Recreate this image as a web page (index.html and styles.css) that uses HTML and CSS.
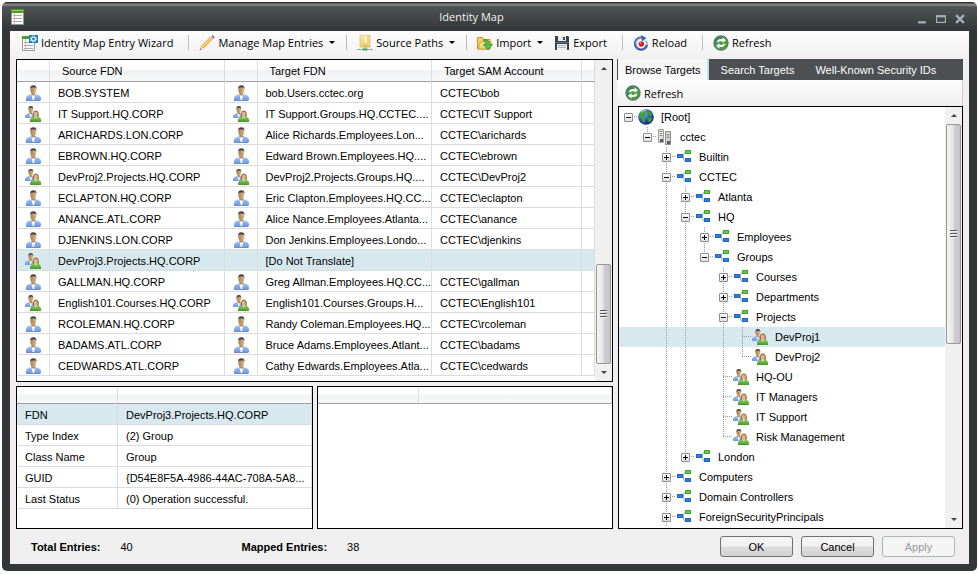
FILE: index.html
```
<!DOCTYPE html>
<html lang="en">
<head>
  <meta charset="UTF-8" />
  <meta name="viewport" content="width=device-width, initial-scale=1.0" />
  <title>Identity Map</title>
  <link rel="stylesheet" href="styles.css">
</head>
<body>
  <!-- Icon sprite -->
  <svg class="sprite" aria-hidden="true">
    <defs>
      <linearGradient id="gBlue" x1="0" y1="0" x2="0" y2="1"><stop offset="0" stop-color="#a9c3f0"/><stop offset="1" stop-color="#6d97e2"/></linearGradient>
      <linearGradient id="gGreen" x1="0" y1="0" x2="0" y2="1"><stop offset="0" stop-color="#8fd060"/><stop offset="1" stop-color="#3f9a26"/></linearGradient>
      <linearGradient id="gSkin" x1="0" y1="0" x2="1" y2="0"><stop offset="0" stop-color="#a87d50"/><stop offset="1" stop-color="#dcb98c"/></linearGradient>
      <linearGradient id="gYellow" x1="0" y1="0" x2="1" y2="1"><stop offset="0" stop-color="#fdf3b4"/><stop offset="1" stop-color="#e0b43c"/></linearGradient>
      <radialGradient id="gGlobe" cx="0.35" cy="0.3" r="0.8"><stop offset="0" stop-color="#8db8ee"/><stop offset="0.5" stop-color="#2d57b4"/><stop offset="1" stop-color="#0c1f5c"/></radialGradient>
      <linearGradient id="gRefresh" x1="0" y1="0" x2="1" y2="1"><stop offset="0" stop-color="#2f7d5c"/><stop offset="1" stop-color="#5fae2e"/></linearGradient>
    </defs>
    <symbol id="user" viewBox="0 0 16 16">
      <path d="M1 15.500v-2.500q.2-2.500 3-3l2.500-1h4l2.500 1q2.800.500 3 3v2.500z" fill="url(#gBlue)"/>
      <path d="M1 15.500h14" stroke="#5a7fca" stroke-width=".8"/>
      <path d="M6.500 9.500h3.600l-1 5.500h-1.400z" fill="#fff"/>
      <path d="M6.500 7h3.600v2.500l-1.800 1.500-1.800-1.500z" fill="#b98c5c"/>
      <ellipse cx="8.300" cy="4.900" rx="2.900" ry="3.900" fill="url(#gSkin)"/>
      <path d="M5.100 4.200q-.4-3.900 3.200-4 3.600.100 3.200 4-.5-1.300-1-1.600h-4.400q-.5.300-1 1.600z" fill="#454545"/>
    </symbol>
    <symbol id="group" viewBox="0 0 16 16">
      <path d="M0 12v-2q.2-2 2.500-2.600l2-.7h3l2 1v4.300z" fill="url(#gBlue)"/>
      <path d="M4.500 7.500h2.200l-.3 4h-1z" fill="#fff"/>
      <path d="M4.500 5.500h2.500v2l-1 1-1.500-1z" fill="#b98c5c"/>
      <ellipse cx="5.800" cy="3.600" rx="2.300" ry="3.100" fill="url(#gSkin)"/>
      <path d="M3.400 3.300q-.3-3.200 2.500-3.300 2.700.100 2.400 3.300l-.9-1.500h-3z" fill="#454545"/>
      <path d="M8 11q-.9-6.500 2.800-6.600 3.700.100 2.900 6.600z" fill="#96683c"/>
      <path d="M5 16v-2q.3-2.500 3-3l1.500-.5h3l1.500.5q1.900.700 2 3v2z" fill="url(#gGreen)"/>
      <path d="M9.500 9.500h2.600l.3 1.300-1.600 2.200-1.600-2.200z" fill="#e8c8a0"/>
      <ellipse cx="10.700" cy="8" rx="2" ry="2.500" fill="#dfb488"/>
    </symbol>
    <symbol id="ou" viewBox="0 0 16 16">
      <path d="M6 7.500h2M10 3.500h-1q-1.500 0-1.500 3.500 0 5.500 1.500 5.500h1" fill="none" stroke="#97a3b3"/>
      <rect x="1.500" y="5.500" width="5" height="3" fill="#1f84ee" stroke="#2a62b4"/>
      <rect x="9.500" y="1.500" width="5" height="3" fill="#5ad03a" stroke="#4aa032"/>
      <rect x="9.500" y="9.500" width="5" height="3" fill="#1f84ee" stroke="#2a62b4"/>
    </symbol>
    <symbol id="globe" viewBox="0 0 16 16">
      <circle cx="8" cy="8" r="7.800" fill="url(#gGlobe)"/>
      <path d="M1 6q2-4.500 6-5l1.500 1.500-1.500 2 1 1.500-2.500 2.500 1.500 2.500-1 3q-2-1-2.500-4z" fill="#3fa535"/>
      <path d="M10.500 1.500q3 1.300 4.200 4.500l-1.700 1.500-2-1.500-1.500-2zM9.500 9l3-1 2 1.500q-.7 2.500-3 4.200l-1.500-2z" fill="#3a9a30"/>
      <path d="M3 3.500q2-2.300 5-2" stroke="#fff" stroke-opacity=".6" fill="none"/>
    </symbol>
    <symbol id="server" viewBox="0 0 16 16">
      <path d="M1.500.5h5v13h-5z" fill="#e2e2e0" stroke="#a2a2a0"/>
      <path d="M8.500 2.500h5v13h-5z" fill="#d6d6d4" stroke="#8e8e8c"/>
      <path d="M2.500 2.500h3M2.500 6.500h3M9.500 5.500h3M9.500 8.500h3" stroke="#909090"/>
      <path d="M3 4.500h2M10 7h2" stroke="#62c23c"/>
      <path d="M3 10h3v3h-3zM10 12h3v3h-3z" fill="#5c5c5c"/>
    </symbol>
    <symbol id="sheet" viewBox="0 0 16 16">
      <path d="M1.500.5h12v15h-12z" fill="#fbfbfb" stroke="#8f9a8a"/>
      <path d="M1 0h13v4h-13z" fill="#4f9c2c"/>
      <path d="M2 1.500h11" stroke="#8cca60"/>
      <path d="M3 6.500h9M3 9.500h9M3 12.500h9" stroke="#a9a9b2"/>
      <path d="M4.500 4v11" stroke="#e09a9a" stroke-width=".7"/>
    </symbol>
    <symbol id="wizard" viewBox="0 0 16 16">
      <path d="M.5 1.500h12v14h-12z" fill="#fbfbfb" stroke="#999"/>
      <path d="M0 1h13v3h-13z" fill="#4f9c2c"/>
      <path d="M2 7.500h8M2 10.500h9M2 13.500h9" stroke="#a9a9b2"/>
      <path d="M3.500 4v11" stroke="#e09a9a" stroke-width=".7"/>
      <path d="M7 0h9v8h-9z" fill="#1680c4"/>
      <circle cx="11.500" cy="4" r="2" fill="none" stroke="#fff" stroke-width="1.200"/>
      <circle cx="11.500" cy="4" r="3" fill="none" stroke="#fff" stroke-dasharray="1.200 1.150"/>
    </symbol>
    <symbol id="pencil" viewBox="0 0 16 16">
      <path d="M1.500 14l1-3 9-9 2 2-9 9z" fill="#f5bd45" stroke="#c98f30" stroke-width=".6"/>
      <path d="M3.500 11.500l8.500-8.500" stroke="#ffe49a"/>
      <path d="M1 15l1.300-3.500 2 2z" fill="#efd6ac"/>
      <path d="M.5 15.500l.9-2 1 1z" fill="#555"/>
      <path d="M11.300 2.200l1-1 2.300 2.300-1 1z" fill="#c3c8ce"/>
      <path d="M12.300 1.200l1.200-1q2 .3 2.200 2.300l-1 1.200z" fill="#e2525c"/>
    </symbol>
    <symbol id="paths" viewBox="0 0 16 16">
      <path d="M3 0h10v12h-10z" fill="url(#gYellow)" stroke="#d6b65c" stroke-width=".7"/>
      <path d="M7.500 1h2.500v7h-2.500z" fill="#fffbe0"/>
      <path d="M9.500 1h3v10.500l-3-2z" fill="#f0d888"/>
      <path d="M8 12v2" stroke="#6a9a6a"/>
      <path d="M0 14.500h16" stroke="#9aa69a"/>
      <path d="M5.500 13.500h5v2h-5z" fill="#3fae4a"/>
    </symbol>
    <symbol id="import" viewBox="0 0 16 16">
      <path d="M.5 14v-11.500h5l1.500 2h6v9.500z" fill="#f5cf5c" stroke="#c89426"/>
      <path d="M1 14l2.500-7h11l-2.500 7z" fill="url(#gYellow)" stroke="#c89426" stroke-width=".7"/>
      <path d="M6 5q6-1.500 6.500 4.500h3l-4.500 5.500-4.500-5.500h2.500q0-3-3-4.500z" fill="#57c043" stroke="#27882a" stroke-width=".7"/>
    </symbol>
    <symbol id="floppy" viewBox="0 0 16 16">
      <path d="M1 1h13l1 1v13h-14z" fill="#3a4450"/>
      <path d="M4 1h8v5h-8z" fill="#e8edf2"/>
      <path d="M9 2h2v3h-2z" fill="#3a4450"/>
      <path d="M3 9h10v6h-10z" fill="#f2f5f8"/>
      <path d="M4 10.500h8M4 12.500h8" stroke="#a8b2bc"/>
      <path d="M1.500 7.500h13" stroke="#61707f"/>
    </symbol>
    <symbol id="reload" viewBox="0 0 16 16">
      <path d="M9 2.700a6 6 0 1 0 5 7" fill="none" stroke="#3f66a8" stroke-width="2.400"/>
      <path d="M8.500 3a5.700 5.700 0 0 0-6 5.500" fill="none" stroke="#9dbbe6" stroke-width=".9"/>
      <path d="M8 0l5.500 3-4.500 3.500z" fill="#3f66a8"/>
      <path d="M12.500 5.500q1.800 1.500 1.800 4" fill="none" stroke="#7f9fd4" stroke-width="1.200"/>
      <circle cx="8.300" cy="9" r="2.800" fill="#d61f26"/>
      <circle cx="7.500" cy="8" r="1" fill="#f38a8a"/>
    </symbol>
    <symbol id="refresh" viewBox="0 0 16 16">
      <circle cx="8" cy="8" r="7" fill="url(#gRefresh)" stroke="#4c7f66" stroke-width="1.300"/>
      <path d="M3.500 7.300q.8-3 4-3.300h2v-1.800l3.500 3-3.500 2.800v-1.800h-2q-1.500 0-2 1.100zM12.500 8.700q-.8 3-4 3.300h-2v1.800l-3.500-3 3.500-2.800v1.800h2q1.500 0 2-1.100z" fill="#f4faf2"/>
    </symbol>
  </svg>

  <div class="window">
    <header class="titlebar">
      <svg class="icon"><use href="#sheet"/></svg>
      <h1>Identity Map</h1>
      <div class="controls">
        <button aria-label="Minimize"><svg viewBox="0 0 9 9"><path d="M1 7.500h7" stroke-width="2"/></svg></button>
        <button aria-label="Maximize"><svg viewBox="0 0 9 9"><path d="M.5 2v5.500h8v-5.500M0 2h9" stroke-width="1"/><path d="M0 2h9" stroke-width="2"/></svg></button>
        <button aria-label="Close"><svg viewBox="0 0 9 9"><path d="M1 1l7 7M8 1l-7 7" stroke-width="2"/></svg></button>
      </div>
    </header>

    <div class="content">
      <div class="toolbar" role="toolbar">
        <button><svg class="icon"><use href="#wizard"/></svg>Identity Map Entry Wizard</button>
        <span class="sep"></span>
        <button class="menu"><svg class="icon"><use href="#pencil"/></svg>Manage Map Entries</button>
        <span class="sep"></span>
        <button class="menu"><svg class="icon"><use href="#paths"/></svg>Source Paths</button>
        <span class="sep"></span>
        <button class="menu"><svg class="icon"><use href="#import"/></svg>Import</button>
        <button><svg class="icon"><use href="#floppy"/></svg>Export</button>
        <span class="sep"></span>
        <button><svg class="icon"><use href="#reload"/></svg>Reload</button>
        <span class="sep"></span>
        <button><svg class="icon"><use href="#refresh"/></svg>Refresh</button>
      </div>

      <main class="main">
        <div class="left">
          <section class="panel entries">
            <table>
              <colgroup><col class="c-icon"><col><col class="c-icon"><col><col class="c-sam"><col class="c-end"></colgroup>
              <thead>
                <tr><th></th><th>Source FDN</th><th></th><th>Target FDN</th><th>Target SAM Account</th><th></th></tr>
              </thead>
              <tbody>
                <tr><td><svg class="icon"><use href="#user"/></svg></td><td>BOB.SYSTEM</td><td><svg class="icon"><use href="#user"/></svg></td><td>bob.Users.cctec.org</td><td>CCTEC\bob</td><td></td></tr>
                <tr><td><svg class="icon"><use href="#group"/></svg></td><td>IT Support.HQ.CORP</td><td><svg class="icon"><use href="#group"/></svg></td><td>IT Support.Groups.HQ.CCTEC....</td><td>CCTEC\IT Support</td><td></td></tr>
                <tr><td><svg class="icon"><use href="#user"/></svg></td><td>ARICHARDS.LON.CORP</td><td><svg class="icon"><use href="#user"/></svg></td><td>Alice Richards.Employees.Lon...</td><td>CCTEC\arichards</td><td></td></tr>
                <tr><td><svg class="icon"><use href="#user"/></svg></td><td>EBROWN.HQ.CORP</td><td><svg class="icon"><use href="#user"/></svg></td><td>Edward Brown.Employees.HQ....</td><td>CCTEC\ebrown</td><td></td></tr>
                <tr><td><svg class="icon"><use href="#group"/></svg></td><td>DevProj2.Projects.HQ.CORP</td><td><svg class="icon"><use href="#group"/></svg></td><td>DevProj2.Projects.Groups.HQ....</td><td>CCTEC\DevProj2</td><td></td></tr>
                <tr><td><svg class="icon"><use href="#user"/></svg></td><td>ECLAPTON.HQ.CORP</td><td><svg class="icon"><use href="#user"/></svg></td><td>Eric Clapton.Employees.HQ.CC...</td><td>CCTEC\eclapton</td><td></td></tr>
                <tr><td><svg class="icon"><use href="#user"/></svg></td><td>ANANCE.ATL.CORP</td><td><svg class="icon"><use href="#user"/></svg></td><td>Alice Nance.Employees.Atlanta...</td><td>CCTEC\anance</td><td></td></tr>
                <tr><td><svg class="icon"><use href="#user"/></svg></td><td>DJENKINS.LON.CORP</td><td><svg class="icon"><use href="#user"/></svg></td><td>Don Jenkins.Employees.Londo...</td><td>CCTEC\djenkins</td><td></td></tr>
                <tr class="selected"><td><svg class="icon"><use href="#group"/></svg></td><td>DevProj3.Projects.HQ.CORP</td><td></td><td>[Do Not Translate]</td><td></td><td></td></tr>
                <tr><td><svg class="icon"><use href="#user"/></svg></td><td>GALLMAN.HQ.CORP</td><td><svg class="icon"><use href="#user"/></svg></td><td>Greg Allman.Employees.HQ.CC...</td><td>CCTEC\gallman</td><td></td></tr>
                <tr><td><svg class="icon"><use href="#group"/></svg></td><td>English101.Courses.HQ.CORP</td><td><svg class="icon"><use href="#group"/></svg></td><td>English101.Courses.Groups.H...</td><td>CCTEC\English101</td><td></td></tr>
                <tr><td><svg class="icon"><use href="#user"/></svg></td><td>RCOLEMAN.HQ.CORP</td><td><svg class="icon"><use href="#user"/></svg></td><td>Randy Coleman.Employees.HQ...</td><td>CCTEC\rcoleman</td><td></td></tr>
                <tr><td><svg class="icon"><use href="#user"/></svg></td><td>BADAMS.ATL.CORP</td><td><svg class="icon"><use href="#user"/></svg></td><td>Bruce Adams.Employees.Atlant...</td><td>CCTEC\badams</td><td></td></tr>
                <tr><td><svg class="icon"><use href="#user"/></svg></td><td>CEDWARDS.ATL.CORP</td><td><svg class="icon"><use href="#user"/></svg></td><td>Cathy Edwards.Employees.Atla...</td><td>CCTEC\cedwards</td><td></td></tr>
              </tbody>
            </table>
            <div class="scrollbar at-end"><span class="arrow up"></span><span class="thumb"></span><span class="arrow down"></span></div>
          </section>

          <div class="details">
            <section class="panel">
              <table>
                <colgroup><col class="c-name"><col></colgroup>
                <thead><tr><th></th><th></th></tr></thead>
                <tbody>
                  <tr class="selected"><td>FDN</td><td>DevProj3.Projects.HQ.CORP</td></tr>
                  <tr><td>Type Index</td><td>(2) Group</td></tr>
                  <tr><td>Class Name</td><td>Group</td></tr>
                  <tr><td>GUID</td><td>{D54E8F5A-4986-44AC-708A-5A8...</td></tr>
                  <tr><td>Last Status</td><td>(0) Operation successful.</td></tr>
                </tbody>
              </table>
            </section>
            <section class="panel">
              <table>
                <colgroup><col class="c-name"><col></colgroup>
                <thead><tr><th></th><th></th></tr></thead>
              </table>
            </section>
          </div>
        </div>

        <aside class="right">
          <div class="tabs" role="tablist">
            <button class="tab active" role="tab" aria-selected="true">Browse Targets</button>
            <button class="tab" role="tab">Search Targets</button>
            <button class="tab" role="tab">Well-Known Security IDs</button>
          </div>
          <div class="toolbar small" role="toolbar">
            <button><svg class="icon"><use href="#refresh"/></svg>Refresh</button>
          </div>
          <section class="panel browse">
            <ul class="tree" role="tree">
              <li><i class="node"><button class="toggle open" aria-label="Collapse"></button></i><svg class="icon"><use href="#globe"/></svg>[Root]</li>
              <li><i></i><i class="node up"><button class="toggle open" aria-label="Collapse"></button></i><svg class="icon"><use href="#server"/></svg>cctec</li>
              <li><i></i><i></i><i class="node line"><button class="toggle" aria-label="Expand"></button></i><svg class="icon"><use href="#ou"/></svg>Builtin</li>
              <li><i></i><i></i><i class="node line"><button class="toggle open" aria-label="Collapse"></button></i><svg class="icon"><use href="#ou"/></svg>CCTEC</li>
              <li><i></i><i></i><i class="line"></i><i class="node line"><button class="toggle" aria-label="Expand"></button></i><svg class="icon"><use href="#ou"/></svg>Atlanta</li>
              <li><i></i><i></i><i class="line"></i><i class="node line"><button class="toggle open" aria-label="Collapse"></button></i><svg class="icon"><use href="#ou"/></svg>HQ</li>
              <li><i></i><i></i><i class="line"></i><i class="line"></i><i class="node line"><button class="toggle" aria-label="Expand"></button></i><svg class="icon"><use href="#ou"/></svg>Employees</li>
              <li><i></i><i></i><i class="line"></i><i class="line"></i><i class="node up"><button class="toggle open" aria-label="Collapse"></button></i><svg class="icon"><use href="#ou"/></svg>Groups</li>
              <li><i></i><i></i><i class="line"></i><i class="line"></i><i></i><i class="node line"><button class="toggle" aria-label="Expand"></button></i><svg class="icon"><use href="#ou"/></svg>Courses</li>
              <li><i></i><i></i><i class="line"></i><i class="line"></i><i></i><i class="node line"><button class="toggle" aria-label="Expand"></button></i><svg class="icon"><use href="#ou"/></svg>Departments</li>
              <li><i></i><i></i><i class="line"></i><i class="line"></i><i></i><i class="node line"><button class="toggle open" aria-label="Collapse"></button></i><svg class="icon"><use href="#ou"/></svg>Projects</li>
              <li class="selected"><i></i><i></i><i class="line"></i><i class="line"></i><i></i><i class="line"></i><i class="node line"></i><svg class="icon"><use href="#group"/></svg>DevProj1</li>
              <li><i></i><i></i><i class="line"></i><i class="line"></i><i></i><i class="line"></i><i class="node up"></i><svg class="icon"><use href="#group"/></svg>DevProj2</li>
              <li><i></i><i></i><i class="line"></i><i class="line"></i><i></i><i class="node line"></i><svg class="icon"><use href="#group"/></svg>HQ-OU</li>
              <li><i></i><i></i><i class="line"></i><i class="line"></i><i></i><i class="node line"></i><svg class="icon"><use href="#group"/></svg>IT Managers</li>
              <li><i></i><i></i><i class="line"></i><i class="line"></i><i></i><i class="node line"></i><svg class="icon"><use href="#group"/></svg>IT Support</li>
              <li><i></i><i></i><i class="line"></i><i class="line"></i><i></i><i class="node up"></i><svg class="icon"><use href="#group"/></svg>Risk Management</li>
              <li><i></i><i></i><i class="line"></i><i class="node up"><button class="toggle" aria-label="Expand"></button></i><svg class="icon"><use href="#ou"/></svg>London</li>
              <li><i></i><i></i><i class="node line"><button class="toggle" aria-label="Expand"></button></i><svg class="icon"><use href="#ou"/></svg>Computers</li>
              <li><i></i><i></i><i class="node line"><button class="toggle" aria-label="Expand"></button></i><svg class="icon"><use href="#ou"/></svg>Domain Controllers</li>
              <li><i></i><i></i><i class="node line"><button class="toggle" aria-label="Expand"></button></i><svg class="icon"><use href="#ou"/></svg>ForeignSecurityPrincipals</li>
            </ul>
            <div class="scrollbar at-start"><span class="arrow up"></span><span class="thumb tall"></span><span class="arrow down"></span></div>
          </section>
        </aside>
      </main>

      <footer class="footer">
        <dl>
          <dt>Total Entries:</dt><dd>40</dd>
          <dt>Mapped Entries:</dt><dd>38</dd>
        </dl>
        <button>OK</button>
        <button>Cancel</button>
        <button disabled>Apply</button>
      </footer>
    </div>
  </div>
</body>
</html>
```

FILE: styles.css
```
* {
  box-sizing: border-box;
}

body {
  margin: 0;
  padding: 2px 1px 3px 2px;
  height: 100vh;
  background: #fff;
  font-family: "Liberation Sans", Arial, sans-serif;
  font-size: 11px;
  color: #000;
  overflow: hidden;
}

button {
  font: inherit;
  color: inherit;
  border: none;
  background: none;
  padding: 0;
}

.sprite {
  position: absolute;
  width: 0;
  height: 0;
}

.icon {
  width: 16px;
  height: 16px;
  flex: none;
  display: block;
}

/* Window frame */
.window {
  height: 100%;
  display: flex;
  flex-direction: column;
  padding: 0 8px 7px;
  background: linear-gradient(#2b2d2e 1px, #8a8d8e 2px, #6d7071 4px, #505354 5px, #333637 29px);
  border-radius: 5px;
}

.titlebar {
  display: flex;
  align-items: center;
  height: 29px;
  flex: none;
}

.titlebar h1 {
  flex: 1;
  margin: 0;
  text-align: center;
  font: 11px "Open Sans", sans-serif;
  color: #f0f0f0;
}

.controls {
  display: flex;
  gap: 9px;
  padding: 4px 4px 0 0;
}

.controls svg {
  display: block;
  width: 10px;
  height: 10px;
  fill: none;
  stroke: #a9afba;
}

.content {
  flex: 1;
  min-height: 0;
  display: flex;
  flex-direction: column;
  background: #efefef;
}

/* Toolbars */
.toolbar {
  display: flex;
  align-items: center;
  height: 28px;
  flex: none;
  padding: 0 0 5px 12px;
  gap: 10px;
  background: linear-gradient(#fdfdfd, #efefef);
  font: 11px "Open Sans", sans-serif;
}

.toolbar button {
  display: flex;
  align-items: center;
  gap: 3px;
  padding-right: 5px;
  white-space: nowrap;
}

.toolbar .menu {
  padding-right: 1px;
}

.menu::after {
  content: "";
  margin-left: 3px;
  border: 3px solid transparent;
  border-top-color: #000;
  border-bottom: none;
}

.sep {
  width: 1px;
  height: 15px;
  background: #bdbdbd;
}

.toolbar.small {
  height: 26px;
  padding: 0 0 0 8px;
  border-right: 1px solid #ccc;
}

/* Main area */
.main {
  flex: 1;
  min-height: 0;
  display: grid;
  grid-template-columns: minmax(0, 597fr) minmax(0, 346fr);
  gap: 4px;
  padding: 0 6px;
}

.left {
  display: flex;
  flex-direction: column;
  gap: 4px;
  min-height: 0;
}

.right {
  display: flex;
  flex-direction: column;
  min-height: 0;
}

.panel {
  display: flex;
  align-items: stretch;
  background: #fff;
  border: 1px solid #000;
  overflow: hidden;
}

.entries {
  flex: 1;
  min-height: 0;
}

.details {
  display: grid;
  grid-template-columns: 1fr 1fr;
  gap: 4px;
  height: 143px;
}

/* Tables */
table {
  flex: 1;
  min-width: 0;
  width: 100%;
  align-self: flex-start;
  table-layout: fixed;
  border-collapse: separate;
  border-spacing: 0;
}

.c-icon {
  width: 33px;
}

.c-sam {
  width: 150px;
}

.c-end {
  width: 13px;
}

.c-name {
  width: 101px;
}

th,
td {
  height: 21px;
  padding: 1px 0 0 8px;
  text-align: left;
  white-space: nowrap;
  overflow: hidden;
  border-right: 1px solid #dcdcdc;
  border-bottom: 1px solid #dcdcdc;
}

th {
  height: 22px;
  padding-left: 12px;
  font-weight: normal;
  background: linear-gradient(#fff 45%, #f1f2f4 50%, #f7f8f9);
  border-bottom-color: #a0a0a0;
}

.details th {
  height: 17px;
}

.selected {
  background: #d7e9ee;
}

/* Scrollbars */
.scrollbar {
  width: 17px;
  flex: none;
  display: flex;
  flex-direction: column;
  align-items: center;
  background: #f0f0f0;
}

.arrow {
  width: 17px;
  height: 17px;
  flex: none;
  display: flex;
  align-items: center;
  justify-content: center;
}

.arrow::before {
  content: "";
  border: 3px solid transparent;
}

.arrow.up::before {
  border-bottom-color: #444;
  border-top: none;
}

.arrow.down::before {
  border-top-color: #444;
  border-bottom: none;
}

.thumb {
  width: 15px;
  height: 100px;
  border: 1px solid #979797;
  border-radius: 2px;
  background: linear-gradient(to right, #f5f5f5, #e6e6e8 45%, #cfcfd3 55%, #c3c3c8);
  display: flex;
  align-items: center;
  justify-content: center;
}

.thumb::before {
  content: "";
  width: 7px;
  height: 8px;
  background: repeating-linear-gradient(#555 0 1px, #eee 1px 2px, transparent 2px 3px);
}

.thumb.tall {
  height: 220px;
}

.at-end .thumb {
  margin-top: auto;
}

.at-start .down {
  margin-top: auto;
}

/* Tabs */
.tabs {
  display: flex;
  height: 21px;
  flex: none;
  padding-left: 1px;
  gap: 3px;
  background: #4c5052;
}

.tab {
  padding: 0 9px;
  color: #fff;
  white-space: nowrap;
}

.tab.active {
  padding: 0 6px 0 7px;
  color: #000;
  background: linear-gradient(#f4f4f4, #fafafa);
  border-right: 2px solid #b9e4e8;
}

/* Tree */
.browse {
  flex: 1;
  min-height: 0;
  margin: 0 0 0 1px;
}

.tree {
  flex: 1;
  min-width: 0;
  margin: 0;
  padding: 0;
  list-style: none;
}

.tree li {
  display: flex;
  align-items: center;
  height: 20px;
  white-space: nowrap;
}

.tree .icon {
  margin-right: 7px;
}

.tree i {
  width: 19px;
  height: 20px;
  flex: none;
  display: flex;
  align-items: center;
  justify-content: center;
  background-repeat: no-repeat;
  --v: repeating-linear-gradient(#999 0 1px, transparent 1px 2px);
  --h: repeating-linear-gradient(to right, #999 0 1px, transparent 1px 2px);
}

.tree .line {
  background-image: var(--v);
  background-size: 1px 20px;
  background-position: 9px 0;
}

.tree .node {
  background-image: var(--h);
  background-size: 10px 1px;
  background-position: 9px 9px;
}

.tree .node.line {
  background-image: var(--h), var(--v);
  background-size: 10px 1px, 1px 20px;
  background-position: 9px 9px, 9px 0;
}

.tree .node.up {
  background-image: var(--h), var(--v);
  background-size: 10px 1px, 1px 10px;
  background-position: 9px 9px, 9px 0;
}

.toggle {
  width: 9px;
  height: 9px;
  border: 1px solid #8e8e8e;
  border-radius: 1px;
  background:
    linear-gradient(#000, #000) center / 5px 1px no-repeat,
    linear-gradient(#000, #000) center / 1px 5px no-repeat,
    linear-gradient(#fff, #e0e0e0);
}

.toggle.open {
  background:
    linear-gradient(#000, #000) center / 5px 1px no-repeat,
    linear-gradient(#fff, #e0e0e0);
}

/* Footer */
.footer {
  display: flex;
  align-items: center;
  gap: 8px;
  height: 35px;
  flex: none;
  padding: 0 14px 0 21px;
}

.footer dl {
  flex: 1;
  display: flex;
  margin: 0;
}

.footer dt {
  font-weight: bold;
  margin-right: 20px;
}

.footer dd {
  width: 121px;
  margin: 0;
}

.footer button {
  width: 73px;
  height: 21px;
  border: 1px solid #707070;
  border-radius: 3px;
  background: linear-gradient(#f3f3f3 48%, #dedede 52%, #d2d2d2);
}

.footer button:disabled {
  color: #9a9a9a;
  border-color: #adb2b5;
  background: #f4f4f4;
}
```
